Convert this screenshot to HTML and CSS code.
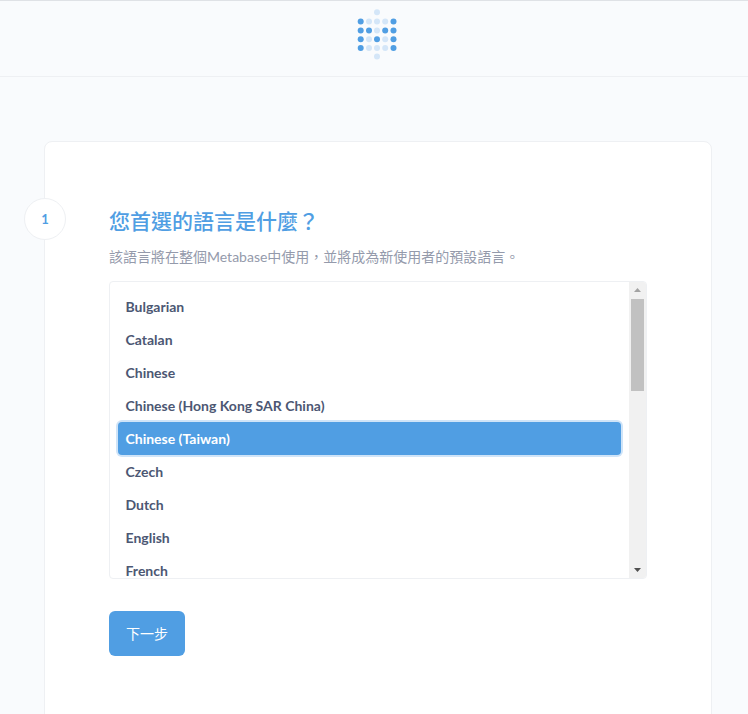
FILE: index.html
```html
<!DOCTYPE html>
<html lang="zh-Hant">
<head>
<meta charset="utf-8">
<title>Metabase</title>
<link rel="stylesheet" href="styles.css">
</head>
<body>
<header class="topbar">
  <svg class="logo" width="40" height="52" viewBox="0 0 40 52" aria-label="Metabase">
    <g class="dot-light">
      <circle cx="20" cy="3.2" r="3"/>
      <circle cx="12" cy="12.5" r="3"/><circle cx="20" cy="12.5" r="3"/><circle cx="28.2" cy="12.5" r="3"/>
      <circle cx="20" cy="21.5" r="3"/>
      <circle cx="12" cy="30.2" r="3"/><circle cx="28.2" cy="30.2" r="3"/>
      <circle cx="12" cy="39" r="3"/><circle cx="20" cy="39" r="3"/><circle cx="28.2" cy="39" r="3"/>
      <circle cx="20" cy="47.6" r="3"/>
    </g>
    <g class="dot-dark">
      <circle cx="3.7" cy="12.5" r="3"/><circle cx="36.5" cy="12.5" r="3"/>
      <circle cx="3.7" cy="21.5" r="3"/><circle cx="12" cy="21.5" r="3"/><circle cx="28.2" cy="21.5" r="3"/><circle cx="36.5" cy="21.5" r="3"/>
      <circle cx="3.7" cy="30.2" r="3"/><circle cx="20" cy="30.2" r="3"/><circle cx="36.5" cy="30.2" r="3"/>
      <circle cx="3.7" cy="39" r="3"/><circle cx="36.5" cy="39" r="3"/>
    </g>
  </svg>
</header>
<main class="page">
  <section class="card">
    <div class="step-badge">1</div>
    <h2 class="title">您首選的語言是什麼？</h2>
    <p class="desc">該語言將在整個Metabase中使用，並將成為新使用者的預設語言。</p>
    <div class="picker">
      <ul class="options">
        <li class="option">Bulgarian</li>
        <li class="option">Catalan</li>
        <li class="option">Chinese</li>
        <li class="option">Chinese (Hong Kong SAR China)</li>
        <li class="option selected">Chinese (Taiwan)</li>
        <li class="option">Czech</li>
        <li class="option">Dutch</li>
        <li class="option">English</li>
        <li class="option">French</li>
      </ul>
      <div class="scrollbar">
        <svg class="arrow" width="17" height="17" viewBox="0 0 17 17"><path class="arrow-up" d="M8.5 6 L12 10 H5 Z"/></svg>
        <div class="track"><div class="thumb"></div></div>
        <svg class="arrow" width="17" height="17" viewBox="0 0 17 17"><path class="arrow-down" d="M5 7 H12 L8.5 11 Z"/></svg>
      </div>
    </div>
    <button class="next" type="button">下一步</button>
  </section>
</main>
</body>
</html>
```
FILE: styles.css
```css
* { box-sizing: border-box; }
html, body { height: 100%; }
body {
  margin: 0;
  height: 714px;
  overflow: hidden;
  background: #f9fbfd;
  font-family: Lato, "Noto Sans CJK TC", sans-serif;
  color: #4c5773;
}
.topbar {
  height: 77px;
  border-top: 1px solid #dfe2e6;
  border-bottom: 1px solid #eef0f3;
  display: flex;
  justify-content: center;
  padding: 8px 0 0 6px;
}
.logo { display: block; }
.dot-light { fill: #d4e6f8; }
.dot-dark { fill: #509ee3; }
.page { padding: 64px 36px 0 44px; height: 637px; overflow: hidden; }
.card {
  position: relative;
  width: 668px;
  height: 640px;
  background: #fff;
  border: 1px solid #eef0f3;
  border-radius: 8px;
  padding: 64px 64px 0 64px;
}
.step-badge {
  position: absolute;
  left: -21px;
  top: 56px;
  width: 42px;
  height: 42px;
  border: 1px solid #eef0f3;
  border-radius: 50%;
  background: #fff;
  color: #509ee3;
  font-size: 13px;
  font-weight: 700;
  display: flex;
  align-items: center;
  justify-content: center;
}
.title {
  margin: 0;
  font-size: 21px;
  line-height: 30px;
  font-weight: 500;
  color: #509ee3;
}
.desc {
  margin: 11px 0 0;
  font-size: 14px;
  line-height: 20px;
  color: #949aab;
}
.picker {
  display: flex;
  width: 538px;
  height: 298px;
  margin-top: 14px;
  border: 1px solid #eef0f3;
  border-radius: 4px;
  overflow: hidden;
  background: #fff;
}
.options {
  flex: 1;
  margin: 0;
  padding: 8px 8px 0 8px;
  list-style: none;
  overflow: hidden;
}
.option {
  height: 33px;
  flex: none;
  padding: 0 7.5px;
  font-size: 14px;
  font-weight: 700;
  line-height: 33px;
  border-radius: 4px;
}
.option.selected {
  background: #509ee3;
  color: #fff;
  box-shadow: 0 0 0 2px #cfe4f8;
}
.scrollbar {
  width: 17px;
  flex: none;
  display: flex;
  flex-direction: column;
  background: #f1f1f1;
}
.arrow { display: block; flex: none; }
.arrow-up { fill: #a3a3a3; }
.arrow-down { fill: #505050; }
.track { flex: 1; padding: 0 2px; }
.thumb { height: 92px; background: #c1c1c1; }
.next {
  display: block;
  margin-top: 32px;
  width: 76px;
  height: 45px;
  border: 0;
  border-radius: 6px;
  padding: 0 0 2px;
  background: #509ee3;
  color: #fff;
  font-family: Lato, "Noto Sans CJK TC", sans-serif;
  font-size: 14px;
  font-weight: 400;
}
```
